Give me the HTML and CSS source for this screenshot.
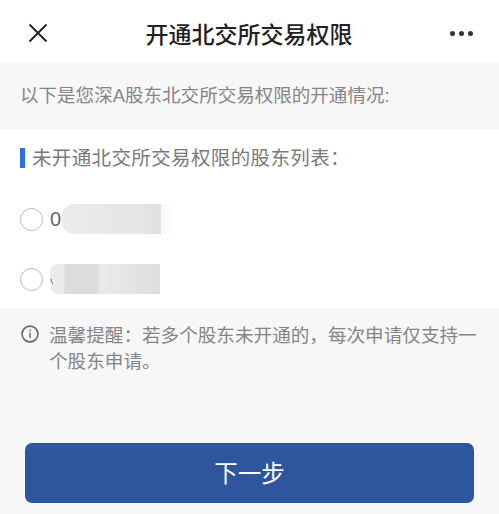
FILE: index.html
```html
<!DOCTYPE html>
<html lang="zh-CN">
<head>
  <meta charset="UTF-8">
  <title>开通北交所交易权限</title>
  <link rel="stylesheet" href="styles.css">
</head>
<body>

  <header class="nav">
    <svg class="close-icon" width="20" height="20" viewBox="0 0 20 20">
      <path d="M1.5 1.5 L18.5 18.5 M18.5 1.5 L1.5 18.5" stroke="#222" stroke-width="1.9" fill="none"/>
    </svg>
    <h1 class="nav-title">开通北交所交易权限</h1>
    <div class="more">
      <span class="dot"></span>
      <span class="dot"></span>
      <span class="dot"></span>
    </div>
  </header>

  <p class="intro">以下是您深A股东北交所交易权限的开通情况:</p>

  <section class="panel">
    <h2 class="panel-title">未开通北交所交易权限的股东列表：</h2>

    <div class="holder">
      <span class="radio"></span>
      <span class="holder-no">0</span>
      <span class="smear smear-one"></span>
    </div>
    <div class="holder holder-second">
      <span class="radio"></span>
      <span class="smear smear-two">
        <svg class="digit-edge" width="4" height="7" viewBox="0 0 4 7">
          <path d="M1 0.5 Q0.8 4 3 6" stroke="#777" stroke-width="1" fill="none"/>
        </svg>
      </span>
    </div>
  </section>

  <div class="notice">
    <svg class="info-icon" width="18" height="18" viewBox="0 0 18 18">
      <circle cx="9" cy="9" r="7.9" stroke="#666" stroke-width="1.6" fill="none"/>
      <rect x="8.3" y="7.6" width="1.4" height="5.4" fill="#666"/>
      <rect x="8.3" y="4.6" width="1.4" height="1.7" fill="#666"/>
    </svg>
    <p class="notice-text">温馨提醒：若多个股东未开通的，每次申请仅支持一个股东申请。</p>
  </div>

  <button class="next-btn">下一步</button>

</body>
</html>
```

FILE: styles.css
```css
* {
  box-sizing: border-box;
}

html, body {
  margin: 0;
  height: 514px;
  overflow: hidden;
}

body {
  font-family: "Liberation Sans", "Noto Sans CJK SC", sans-serif;
  background-color: #f7f7f8;
  color: #777;
}

.nav {
  height: 62px;
  background: #fff;
  display: flex;
  align-items: center;
  justify-content: space-between;
  padding: 4px 26px 0 28px;
}

.nav-title {
  margin: 0;
  font-size: 23px;
  font-weight: 500;
  color: #222;
}

.close-icon {
  display: block;
}

.more {
  display: flex;
  gap: 4px;
}

.dot {
  width: 5px;
  height: 5px;
  border-radius: 50%;
  background: #333;
}

.intro {
  margin: 0;
  height: 67px;
  padding: 20px 0 0 20px;
  font-size: 18.55px;
  line-height: 28px;
  color: #858585;
}

.panel {
  height: 179px;
  background: #fff;
  padding: 19px 0 0 20px;
}

.panel-title {
  margin: 0;
  padding-left: 7px;
  border-left: 5px solid #2f6fe4;
  font-size: 19.5px;
  font-weight: 400;
  line-height: 20px;
  height: 20px;
  color: #7a7a7a;
  letter-spacing: 0.37px;
}

.holder {
  display: flex;
  align-items: center;
  height: 32px;
  margin-top: 35px;
  gap: 7px;
}

.holder-second {
  margin-top: 28px;
}

.radio {
  width: 23px;
  height: 23px;
  border: 1.5px solid #bbb;
  border-radius: 50%;
  background: #fff;
  flex: none;
}

.holder-no {
  font-size: 20px;
  color: #666;
}

.smear {
  display: block;
  height: 30px;
  background: linear-gradient(90deg, #ebebec, #e6e6e7 70%, #dfdfe0 87%, #f7f7f7 88%, #fff);
}

.smear-one {
  width: 113px;
  margin-left: -6px;
  border-radius: 12px 0 0 12px;
}

.smear-two {
  position: relative;
  width: 110px;
  background: linear-gradient(90deg, #ececed 12%, #dcdcdd 14%, #dcdcdd 42%, #eaeaeb 46%, #dedede 100%);
  border-radius: 8px 0 0 8px;
}

.digit-edge {
  position: absolute;
  left: 0;
  top: 14px;
}

.notice {
  display: flex;
  padding: 15px 20px 0 21px;
  gap: 10px;
}

.info-icon {
  flex: none;
  margin-top: 2px;
}

.notice-text {
  margin: 0;
  font-size: 18.6px;
  line-height: 26px;
  color: #858585;
}

.next-btn {
  display: block;
  width: 449px;
  height: 60px;
  margin: 68px 0 0 25px;
  padding-bottom: 3px;
  border: none;
  border-radius: 7px;
  background: #2d569f;
  color: #fff;
  font-family: inherit;
  font-size: 23.5px;
}
```
